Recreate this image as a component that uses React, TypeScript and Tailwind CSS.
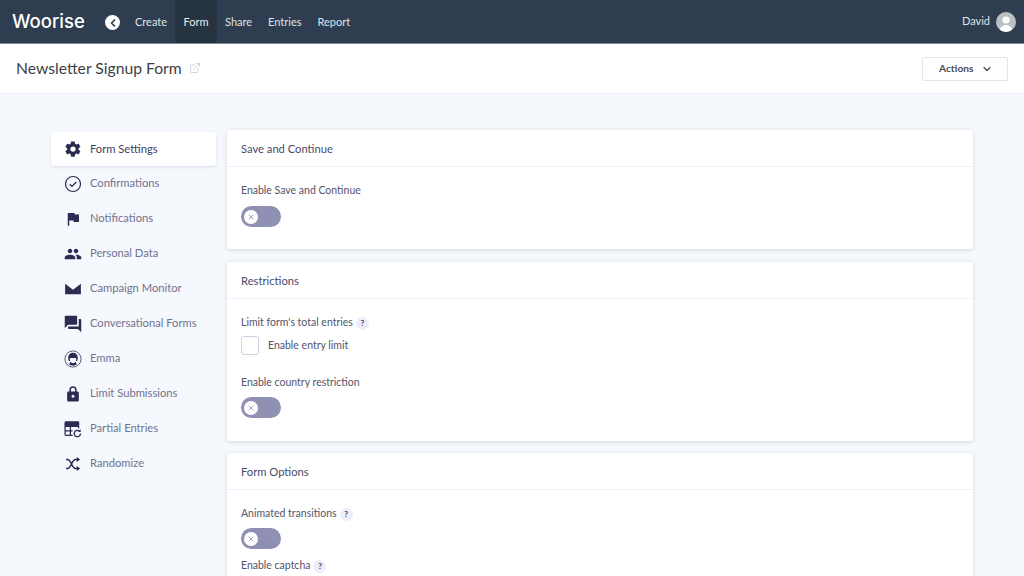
import { ChevronDown, ChevronLeft, ExternalLink, X } from "lucide-react";
import { ReactNode } from "react";

const font = "font-['Lato',sans-serif]";

const navLinks = ["Create", "Form", "Share", "Entries", "Report"];

const icons: Record<string, ReactNode> = {
  gear: (
    <path
      fillRule="evenodd"
      d="M19.4 13c.04-.33.06-.66.06-1s-.02-.67-.07-1l2.15-1.68a.5.5 0 0 0 .12-.64l-2.04-3.53a.5.5 0 0 0-.62-.22l-2.54 1.02a7.5 7.5 0 0 0-1.72-1L14.36 2.4a.5.5 0 0 0-.5-.43H9.79a.5.5 0 0 0-.5.43l-.38 2.7c-.62.25-1.2.59-1.72 1L4.65 5.08a.5.5 0 0 0-.62.22L1.99 8.83a.5.5 0 0 0 .12.64L4.26 11a7.9 7.9 0 0 0 0 2l-2.15 1.68a.5.5 0 0 0-.12.64l2.04 3.53c.13.22.39.3.62.22l2.54-1.02c.52.41 1.1.75 1.72 1l.38 2.7c.05.25.26.43.5.43h4.07c.25 0 .46-.18.5-.43l.38-2.7c.62-.25 1.2-.59 1.72-1l2.54 1.02c.23.08.49 0 .62-.22l2.04-3.53a.5.5 0 0 0-.12-.64L19.4 13zM12 15.5a3.5 3.5 0 1 1 0-7 3.5 3.5 0 0 1 0 7z"
    />
  ),
  check: (
    <>
      <circle cx="12" cy="12" r="10" fill="none" stroke="currentColor" strokeWidth="1.6" />
      <path d="M7.6 12.4l3 2.8 5.8-5.8" fill="none" stroke="currentColor" strokeWidth="1.8" />
    </>
  ),
  flag: <path d="M14.4 6L14 4H5v17h2v-7h5.6l.4 2h7V6z" />,
  people: (
    <path d="M16 11c1.66 0 2.99-1.34 2.99-3S17.66 5 16 5c-1.66 0-3 1.34-3 3s1.34 3 3 3zm-8 0c1.66 0 2.99-1.34 2.99-3S9.66 5 8 5C6.34 5 5 6.34 5 8s1.34 3 3 3zm0 2c-2.33 0-7 1.17-7 3.5V19h14v-2.5c0-2.33-4.67-3.5-7-3.5zm8 0c-.29 0-.62.02-.97.05 1.16.84 1.97 1.97 1.97 3.45V19h6v-2.5c0-2.33-4.67-3.5-7-3.5z" />
  ),
  mail: <path d="M1.5 5l10.5 8 10.5-8v14h-21V5zm0 14l9-6.8 1.5 1.3 1.5-1.3 9 6.8h-21z" />,
  chat: (
    <g transform="translate(-1.2 -1.2) scale(1.1)">
      <path d="M21 6h-2v9H6v2c0 .55.45 1 1 1h11l4 4V7c0-.55-.45-1-1-1zm-4 6V3c0-.55-.45-1-1-1H3c-.55 0-1 .45-1 1v14l4-4h10c.55 0 1-.45 1-1z" />
    </g>
  ),
  emma: (
    <>
      <circle cx="12" cy="12" r="10.8" fill="none" stroke="currentColor" strokeWidth="1" />
      <path d="M12 3.8c-4 0-6.4 2.8-6.4 6.4 0 1.7.3 3.2 1 4.5h1.7c-.4-1-.7-2.5-.6-3.8 2.4-.2 7.2-.2 8.6 0 .1 1.3-.2 2.8-.6 3.8h1.7c.7-1.3 1-2.8 1-4.5 0-3.6-2.4-6.4-6.4-6.4z" />
      <path d="M8.5 15.8c1 1.2 2.2 1.8 3.5 1.8s2.5-.6 3.5-1.8l1.7 3.6c-1.5 1-3.2 1.5-5.2 1.5s-3.7-.5-5.2-1.5l1.7-3.6z" />
    </>
  ),
  lock: (
    <path
      fillRule="evenodd"
      d="M18 8.5h-1.2V6.4a4.8 4.8 0 0 0-9.6 0v2.1H6c-1 0-1.8.8-1.8 1.8v9.9c0 1 .8 1.8 1.8 1.8h12c1 0 1.8-.8 1.8-1.8v-9.9c0-1-.8-1.8-1.8-1.8zM9.2 6.4a2.8 2.8 0 0 1 5.6 0v2.1H9.2V6.4zM12 17a2 2 0 1 1 0-4 2 2 0 0 1 0 4z"
    />
  ),
  table: (
    <>
      <path
        d="M11.5 20.5H2.5a1 1 0 0 1-1-1V3.5a1 1 0 0 1 1-1h16a1 1 0 0 1 1 1V11M1.5 8.5h18M1.5 14.5h10M8.5 8.5v12"
        fill="none"
        stroke="currentColor"
        strokeWidth="1.7"
      />
      <path d="M1.5 2.5h18v6h-18z" />
      <path d="M22 18a4.2 4.2 0 1 1-1.3-3" fill="none" stroke="currentColor" strokeWidth="1.7" />
      <path d="M22.2 12.4v3.6h-3.6z" />
    </>
  ),
  shuffle: (
    <>
      <path
        d="M2.7 6h2c5 0 5.6 12 10.6 12H18M2.7 18h2c5 0 5.6-12 10.6-12H18"
        fill="none"
        stroke="currentColor"
        strokeWidth="2"
      />
      <path d="M17 2.8L21.5 6 17 9.2zM17 14.8l4.500 3.200-4.500 3.200z" />
    </>
  ),
};

const sideItems: [string, string][] = [
  ["gear", "Form Settings"],
  ["check", "Confirmations"],
  ["flag", "Notifications"],
  ["people", "Personal Data"],
  ["mail", "Campaign Monitor"],
  ["chat", "Conversational Forms"],
  ["emma", "Emma"],
  ["lock", "Limit Submissions"],
  ["table", "Partial Entries"],
  ["shuffle", "Randomize"],
];

function Toggle() {
  return (
    <div className="flex h-[21px] w-[40px] items-center rounded-full bg-[#8f90b4] pl-[3px]">
      <div className="flex h-[14px] w-[14px] items-center justify-center rounded-full bg-white">
        <X size={8} strokeWidth={2.5} className="text-[#8f90b4]" />
      </div>
    </div>
  );
}

function Help() {
  return (
    <span className="ml-[3px] flex h-[13px] w-[13px] items-center justify-center rounded-full bg-[#eeeefa] text-[8px] font-bold text-[#3b3c64]">
      ?
    </span>
  );
}

function Label({ text, help }: { text: string; help?: boolean }) {
  return (
    <div className="flex h-4 items-center text-[10.5px] text-[#53546a]">
      {text}
      {help && <Help />}
    </div>
  );
}

function Card({ title, children }: { title: string; children: ReactNode }) {
  return (
    <section className="rounded-[3px] bg-white shadow-[0_1px_4px_rgba(50,60,100,0.16)]">
      <h2 className="flex h-[37px] items-center border-b border-[#eef0f5] px-[14px] pt-[3px] text-[11.2px] font-normal text-[#4a4b6a]">
        {title}
      </h2>
      {children}
    </section>
  );
}

export default function App() {
  return (
    <div className={`${font} h-[576px] w-[1024px] overflow-hidden bg-[#f5f8fc]`}>
      <nav className="flex h-[44px] items-stretch border-b border-[#7f8b98] bg-[#2e3e50] pl-3 pr-[8px] text-white">
        <div className="flex w-[85px] items-center font-['Inter',sans-serif] text-[18.5px] leading-none font-medium">
          Woorise
        </div>
        <div className="ml-2 flex items-center pt-[2px]">
          <span className="flex h-[15px] w-[15px] items-center justify-center rounded-full bg-white">
            <ChevronLeft size={12} strokeWidth={3.5} className="text-[#2e3e50]" />
          </span>
        </div>
        <div className="ml-[7px] flex text-[11px] text-[#dfe3e8]">
          {navLinks.map((l) => (
            <a
              key={l}
              className={
                l === "Form"
                  ? "flex w-[42px] items-center justify-center bg-[#263442] pt-px text-[#e8ebee]"
                  : "flex items-center px-2 pt-px"
              }
            >
              {l}
            </a>
          ))}
        </div>
        <div className="ml-auto flex items-center gap-[6px] text-[11px] text-[#dfe3e8]">
          David
          <span className="flex h-5 w-5 items-end justify-center overflow-hidden rounded-full bg-[#bcc0c4]">
            <svg viewBox="0 0 20 20" className="h-5 w-5" fill="#fff">
              <circle cx="10" cy="8" r="3.6" />
              <path d="M3.5 20c.5-5 3-7 6.5-7s6 2 6.5 7z" />
            </svg>
          </span>
        </div>
      </nav>

      <header className="flex h-[50px] items-center justify-between border-b border-[#eceff4] bg-white pl-4 pr-4">
        <div className="flex items-center gap-[7px]">
          <h1 className="text-[15.7px] font-normal text-[#3d3f45]">Newsletter Signup Form</h1>
          <ExternalLink size={12} strokeWidth={2} className="text-[#cfd5df]" />
        </div>
        <button className="flex h-[24px] w-[86px] items-center gap-[8px] rounded-[2px] border border-[#e2e4e8] pl-4 text-[10.2px] font-bold text-[#4a4c55]">
          Actions
          <ChevronDown size={12} strokeWidth={2.5} />
        </button>
      </header>

      <main className="flex gap-[11px] pl-[51px] pt-[36px]">
        <aside className="w-[165px] pt-[2px]">
          {sideItems.map(([icon, label], i) => (
            <div
              key={label}
              className={
                i === 0
                  ? "flex h-[34px] items-center gap-[8px] rounded-[3px] bg-white pl-[13px] text-[11.2px] text-[#3f4060] shadow-[0_1px_3px_rgba(50,60,100,0.14)]"
                  : "flex h-[35px] items-center gap-[8px] pl-[13px] text-[11.2px] text-[#71728f]"
              }
            >
              <svg viewBox="0 0 24 24" className="h-[18px] w-[18px] text-[#2b2c52]" fill="currentColor">
                {icons[icon]}
              </svg>
              {label}
            </div>
          ))}
        </aside>

        <div className="flex w-[746px] flex-col">
          <Card title="Save and Continue">
            <div className="h-[82px] px-[14px] pt-[16px]">
              <Label text="Enable Save and Continue" />
              <div className="mt-[7px]">
                <Toggle />
              </div>
            </div>
          </Card>

          <div className="mt-[13px]">
            <Card title="Restrictions">
              <div className="h-[142px] px-[14px] pt-[16px]">
                <Label text="Limit form's total entries" help />
                <div className="mt-[5px] flex items-center gap-[9px]">
                  <span className="h-[19px] w-[18px] rounded-[3px] border border-[#cfd0e0]" />
                  <span className="pt-px text-[10.5px] text-[#53546a]">Enable entry limit</span>
                </div>
                <div className="mt-[20px]">
                  <Label text="Enable country restriction" />
                </div>
                <div className="mt-[6px]">
                  <Toggle />
                </div>
              </div>
            </Card>
          </div>

          <div className="mt-[12px]">
            <Card title="Form Options">
              <div className="h-[200px] px-[14px] pt-[16px]">
                <Label text="Animated transitions" help />
                <div className="mt-[6px]">
                  <Toggle />
                </div>
                <div className="mt-[9px]">
                  <Label text="Enable captcha" help />
                </div>
              </div>
            </Card>
          </div>
        </div>
      </main>
    </div>
  );
}
